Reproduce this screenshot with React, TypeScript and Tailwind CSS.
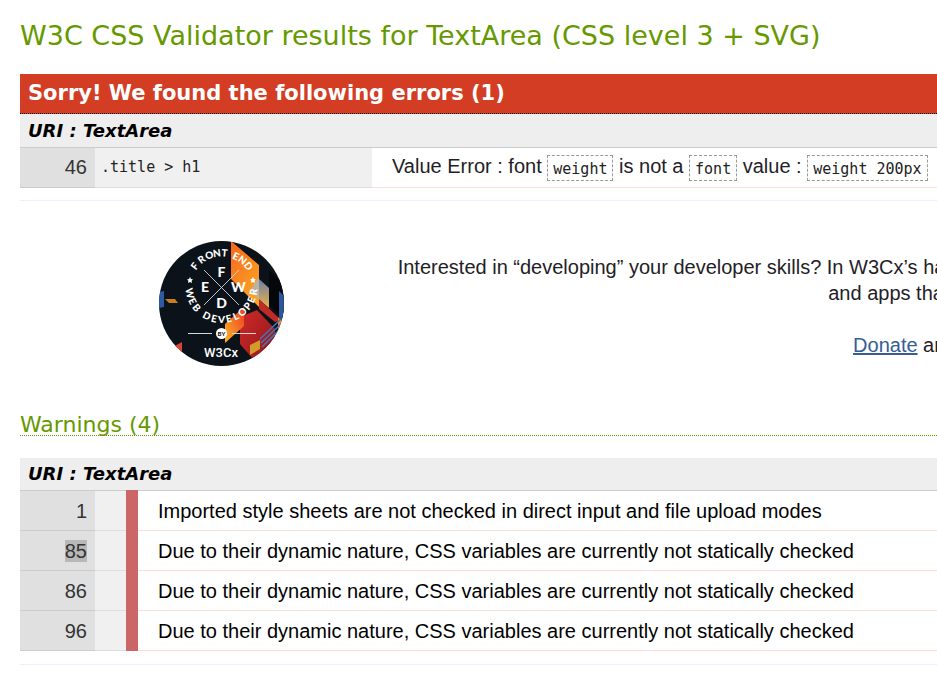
import type { ReactNode } from 'react';

const warnings = [
  { line: 1, message: 'Imported style sheets are not checked in direct input and file upload modes' },
  { line: 85, message: 'Due to their dynamic nature, CSS variables are currently not statically checked', selected: true },
  { line: 86, message: 'Due to their dynamic nature, CSS variables are currently not statically checked' },
  { line: 96, message: 'Due to their dynamic nature, CSS variables are currently not statically checked' },
];

// Letters of the badge's ring, each with its angle in degrees.
const upperRing: [string, number][] = [
  ['F', -52], ['R', -36], ['O', -21], ['N', -8], ['T', 5], ['E', 25], ['N', 38], ['D', 52],
];
const lowerRing: [string, number][] = [
  ['W', 79], ['E', 64], ['B', 50], ['D', 27], ['E', 13], ['V', 0], ['E', -13], ['L', -26],
  ['O', -40], ['P', -54], ['E', -67], ['R', -81],
];

function Code({ children }: { children: ReactNode }) {
  return (
    <code className="inline-block h-[26px] border border-dashed border-[#999] px-[5px] align-middle font-['DejaVu_Sans_Mono',monospace] text-[15px] leading-[27px] text-[#222]">
      {children}
    </code>
  );
}

function UriHeading() {
  return (
    <h3 className="border-b border-[#ccc] bg-[#eee] px-2 font-['DejaVu_Sans',sans-serif] text-lg leading-8 font-bold text-black italic">
      URI : TextArea
    </h3>
  );
}

function CourseBadge() {
  return (
    <svg viewBox="0 0 125 125" className="size-[125px]" role="img" aria-label="Front End Web Developer by W3Cx">
      <defs>
        <clipPath id="disc"><circle cx="62.5" cy="62.5" r="62.5" /></clipPath>
        <linearGradient id="flame" x1="0" y1="0" x2="0.6" y2="1">
          <stop offset="0" stopColor="#f7661c" />
          <stop offset="1" stopColor="#fba324" />
        </linearGradient>
        <linearGradient id="ember" x1="0" y1="1" x2="1" y2="0">
          <stop offset="0" stopColor="#fbb52a" />
          <stop offset="1" stopColor="#ee3b22" />
        </linearGradient>
        <linearGradient id="steel" x1="0" y1="0" x2="0" y2="1">
          <stop offset="0" stopColor="#4a72bd" />
          <stop offset="1" stopColor="#e7b14b" />
        </linearGradient>
        <linearGradient id="crimson" x1="0" y1="0" x2="1" y2="1">
          <stop offset="0" stopColor="#d02a28" />
          <stop offset="1" stopColor="#8c1519" />
        </linearGradient>
      </defs>
      <g clipPath="url(#disc)">
        <rect width="125" height="125" fill="#0b1219" />
        <path d="M110 30 L125 42 V78 L110 64 Z" fill="#05070b" />
        <path d="M91 30 L110 47 V67 L91 51 Z" fill="url(#steel)" />
        <path d="M72 0 L100 24 V66 L72 38 Z" fill="url(#flame)" />
        <path d="M91 50 L100 36 V58 Z" fill="#b8b3a6" />
        <path d="M120 50 L125 55 V82 L120 76 Z" fill="#2d5798" />
        <path d="M100 58 L122 79 L116 81 L100 68 Z" fill="#c02b27" />
        <path d="M81 76 L98 69 L116 88 V112 L100 125 L81 103 Z" fill="url(#crimson)" />
        <path d="M66 83 L85 66 V85 L66 102 Z" fill="url(#ember)" />
        <path d="M119 76 L125 82 V96 L119 90 Z" fill="#f28b22" />
        <path d="M91 104 L101 99 V108 L91 114 Z" fill="#d39a2c" />
        <path d="M101 98 L122 78 M102 102 L122 83 M103 106 L121 88" stroke="#4174ba" strokeWidth="1.6" />
        <path d="M0 51 L5 50 V66 L0 67 Z" fill="#2c5ba4" />
        <path d="M6 58 L16 58 L19 62 L10 62 Z" fill="#c67e20" />
        <path d="M12 107 L23 101 V117 Z" fill="#d64634" />
        <path d="M45 29 L80 64 M80 29 L45 64" stroke="#d6d9dc" strokeWidth="0.9" />
        <g fill="#fff" fontFamily="Lato, sans-serif" fontWeight="900" textAnchor="middle">
          <text x="62.5" y="35.5" fontSize="14">F</text>
          <text x="46" y="51" fontSize="14">E</text>
          <text x="79.5" y="51" fontSize="14">W</text>
          <text x="62.5" y="66.5" fontSize="14">D</text>
          {upperRing.map(([letter, angle]) => (
            <text key={angle} x="62.5" y="15.5" fontSize="10" transform={`rotate(${angle} 62.5 46)`}>{letter}</text>
          ))}
          {lowerRing.map(([letter, angle]) => (
            <text key={angle} x="62.5" y="82" fontSize="10" transform={`rotate(${angle} 62.5 46)`}>{letter}</text>
          ))}
        </g>
        <path
          d="M31 36 L32 38 L34 38.4 L32.6 39.8 L33 42 L31 40.9 L29 42 L29.4 39.8 L28 38.4 L30 38 Z M94 36 L95 38 L97 38.4 L95.6 39.8 L96 42 L94 40.9 L92 42 L92.4 39.8 L91 38.4 L93 38 Z"
          fill="#fff"
        />
        <path d="M29 92.5 H53 M73 92.5 H97" stroke="#d6d9dc" strokeWidth="1" />
        <circle cx="62.5" cy="92.5" r="5.5" fill="#fff" />
        <text x="62.5" y="95" fontSize="6" fontWeight="900" fontFamily="Lato, sans-serif" textAnchor="middle" fill="#111820">BY</text>
        <text x="62" y="115.5" fontSize="13" fontWeight="500" fontFamily="Roboto, sans-serif" textAnchor="middle" fill="#fff">W3Cx</text>
      </g>
    </svg>
  );
}

export default function App() {
  return (
    <main className="overflow-hidden bg-white pl-5 font-['Liberation_Sans',Arial,sans-serif] text-xl text-[#1f2126]">
      <h1 className="pt-5 font-['DejaVu_Sans',sans-serif] text-[27px] leading-8 whitespace-nowrap text-[#690]">
        W3C CSS Validator results for TextArea (CSS level 3 + SVG)
      </h1>

      <section className="mt-[22px] border-b border-[#eef] pb-3">
        <h2 className="border-b border-dotted border-black bg-[#d23d24] px-2 font-['DejaVu_Sans',sans-serif] text-[21px] leading-[39px] font-black text-white">
          Sorry! We found the following errors (1)
        </h2>
        <div className="bg-[#eee] pt-px">
          <UriHeading />
        </div>
        <table className="w-full border-separate border-spacing-0">
          <tbody>
            <tr className="h-10">
              <td className="w-[75px] border-b border-[#ccc] bg-[#e0e0e0] pr-2 pb-0.5 text-right text-[#333]">46</td>
              <td className="w-[277px] border-b border-[#ddd] bg-[#f0f0f0] pl-1.5 font-['DejaVu_Sans_Mono',monospace] text-[15px] text-[#222]">
                {'.title > h1'}
              </td>
              <td className="border-b border-[#fdd] pb-0.5 pl-5 leading-7 whitespace-nowrap">
                Value Error : font <Code>weight</Code> is not a <Code>font</Code> value : <Code>weight 200px</Code>
              </td>
            </tr>
          </tbody>
        </table>
      </section>

      <section className="flex gap-[106px] pt-10 pl-[139px]">
        <div className="shrink-0">
          <CourseBadge />
        </div>
        <div className="w-[1402px] shrink-0 pt-[13px] text-center leading-[26px]">
          <p>
            Interested in “developing” your developer skills? In W3Cx’s hands-on Professional Certificate Program, learn
            how to code the right way by creating Web sites
            <br />
            and apps that use the latest Web standards. Find out more!
          </p>
          <p className="mt-[26px]">
            <a href="#donate" className="text-[#365d95] underline">Donate</a> and help us build better tools for a better web.
          </p>
        </div>
      </section>

      <section className="mt-[49px] border-b border-[#eef] pb-[13px]">
        <h2 className="border-b border-dotted border-[#690] font-['DejaVu_Sans',sans-serif] text-[22px] leading-5 text-[#690]">
          Warnings (4)
        </h2>
        <div className="mt-[22px]">
          <UriHeading />
          <table className="w-full border-separate border-spacing-0 text-black">
            <tbody>
              {warnings.map(({ line, message, selected }) => (
                <tr key={line} className="h-10">
                  <td className="w-[75px] border-b border-[#ccc] bg-[#e0e0e0] pr-2 text-right text-[#333]">
                    <span className={selected ? 'bg-[#b8b8b8]' : ''}>{line}</span>
                  </td>
                  <td className="w-[31px] border-b border-[#ddd] bg-[#f0f0f0]" />
                  <td className="w-3 bg-[#c66] shadow-[0_-1px_0_#cc6666]" />
                  <td className="border-b border-[#fdd] pl-5 whitespace-nowrap">{message}</td>
                </tr>
              ))}
            </tbody>
          </table>
        </div>
      </section>
    </main>
  );
}
